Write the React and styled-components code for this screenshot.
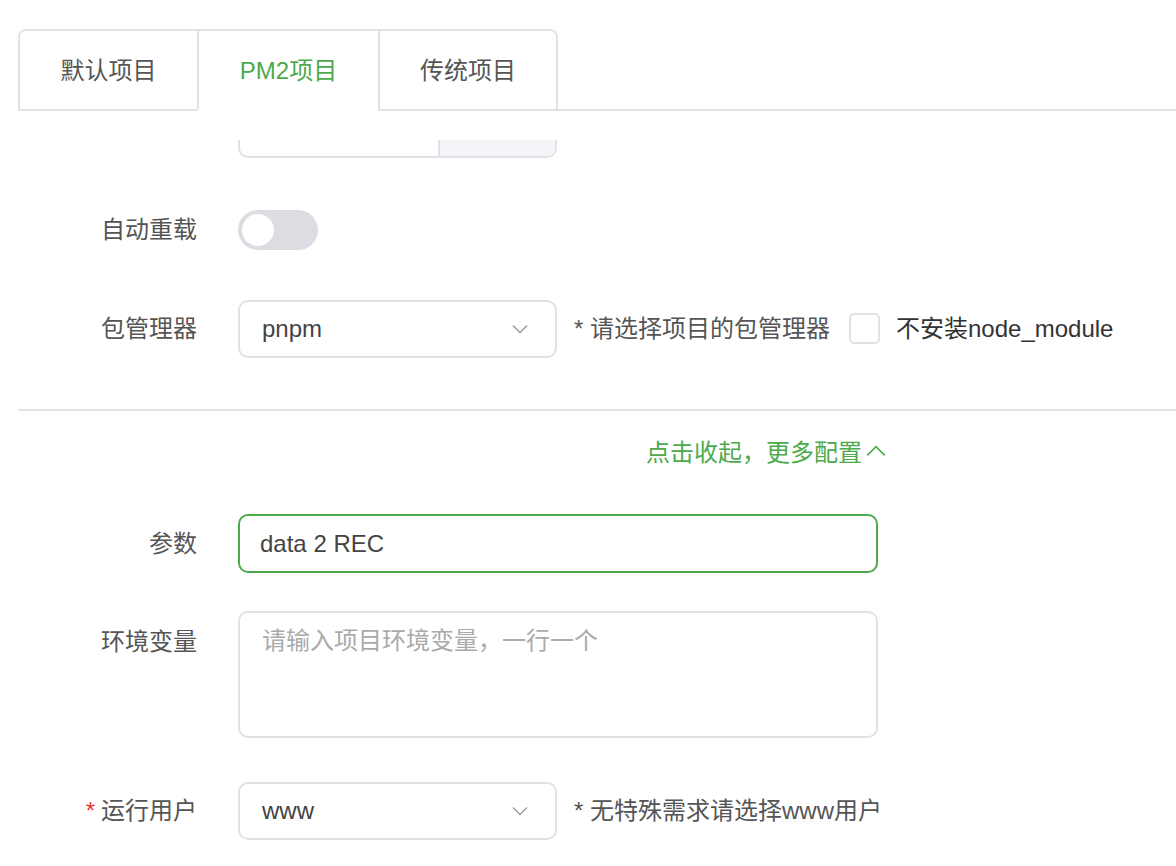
import styled, { createGlobalStyle } from 'styled-components';

const GREEN = '#4caa4a';
const LINE = '#e1e2e7';

const Global = createGlobalStyle`
  html, body {
    margin: 0;
    padding: 0;
    background: #fff;
  }
  body {
    font-family: "Liberation Sans", "Noto Sans CJK SC", sans-serif;
    color: #333;
  }
`;

const Page = styled.div`
  width: 1176px;
  height: 866px;
  overflow: hidden;
  padding: 29px 0 0 18px;
  box-sizing: border-box;
`;

const TabBar = styled.div`
  display: flex;
  border-bottom: 2px solid ${LINE};
`;

const TabGroup = styled.div`
  display: flex;
  border: 2px solid ${LINE};
  border-bottom: none;
  border-radius: 8px 8px 0 0;
  margin-bottom: -2px;
  overflow: hidden;
`;

const Tab = styled.div`
  width: ${(p) => p.$w}px;
  height: 80px;
  display: flex;
  align-items: center;
  justify-content: center;
  padding-bottom: 4px;
  font-size: 24px;
  color: ${(p) => (p.$active ? GREEN : '#555')};
  background: #fff;
  border-left: ${(p) => (p.$first ? 'none' : `2px solid ${LINE}`)};
  border-bottom: 2px solid ${(p) => (p.$active ? '#fff' : LINE)};
  box-sizing: border-box;
`;

const Body = styled.div`
  padding-top: 29px;
`;

const Clip = styled.div`
  height: 18px;
  overflow: hidden;
  display: flex;
  align-items: flex-end;
  padding-left: 220px;
`;

const CutInput = styled.div`
  width: 319px;
  height: 50px;
  border: 2px solid ${LINE};
  border-radius: 10px;
  box-sizing: border-box;
  display: flex;
  overflow: hidden;
`;

const CutMain = styled.div`
  flex: 1;
`;

const CutAddon = styled.div`
  width: 115px;
  background: #f4f5f8;
  border-left: 2px solid ${LINE};
`;

const Form = styled.div`
  display: flex;
  flex-direction: column;
  gap: ${(p) => p.$gap}px;
  padding-top: ${(p) => p.$pad}px;
`;

const Row = styled.div`
  display: flex;
  align-items: ${(p) => (p.$top ? 'flex-start' : 'center')};
  min-height: 58px;
  margin-top: ${(p) => p.$mt || 0}px;
`;

const Label = styled.div`
  width: 220px;
  flex-shrink: 0;
  box-sizing: border-box;
  padding-right: 41px;
  padding-top: ${(p) => (p.$top ? '11px' : '0')};
  padding-bottom: ${(p) => (p.$top ? '0' : '5px')};
  text-align: right;
  font-size: 24px;
  color: #555;

  & > b {
    color: #e53935;
    font-weight: normal;
    margin-right: 6px;
  }
`;

const Switch = styled.div`
  width: 80px;
  height: 40px;
  border-radius: 20px;
  background: #dcdde2;
  display: flex;
  align-items: center;
  padding: 0 4px;
  box-sizing: border-box;

  &::before {
    content: '';
    width: 32px;
    height: 32px;
    border-radius: 50%;
    background: #fff;
  }
`;

const Select = styled.div`
  width: 319px;
  height: 58px;
  border: 2px solid ${LINE};
  border-radius: 10px;
  box-sizing: border-box;
  display: flex;
  align-items: center;
  justify-content: space-between;
  padding: 0 27px 0 22px;
  font-size: 24px;
  color: #444;
`;

const Hint = styled.span`
  font-size: 24px;
  color: #555;
  margin-left: 17px;
  padding-bottom: 5px;
`;

const Check = styled.span`
  display: inline-block;
  width: 31px;
  height: 31px;
  border: 2px solid ${LINE};
  border-radius: 5px;
  box-sizing: border-box;
  margin: 0 16px 2px 19px;
`;

const CheckText = styled.span`
  font-size: 24px;
  color: #333;
  padding-bottom: 5px;
`;

const Divider = styled.div`
  height: 2px;
  background: ${LINE};
  margin-top: 51px;
`;

const Toggle = styled.div`
  padding: 22px 0 0 628px;
  font-size: 24px;
  color: ${GREEN};
  display: flex;
  align-items: center;
  gap: 4px;
`;

const Input = styled.div`
  width: 640px;
  height: 59px;
  border: 2px solid ${(p) => (p.$focus ? GREEN : LINE)};
  border-radius: 10px;
  box-sizing: border-box;
  display: flex;
  align-items: center;
  padding: 0 20px;
  font-size: 24px;
  color: #444;
`;

const TextArea = styled.div`
  width: 640px;
  height: 127px;
  border: 2px solid ${LINE};
  border-radius: 10px;
  box-sizing: border-box;
  padding: 8px 22px;
  font-size: 24px;
  color: #aaa;
`;

const Chevron = ({ up, color = '#999', size = 16 }) => (
  <svg width={size} height={size / 2 + 2} viewBox="0 0 16 9" fill="none">
    <path
      d={up ? 'M1 8 L8 1 L15 8' : 'M1 1 L8 8 L15 1'}
      stroke={color}
      strokeWidth="1.3"
    />
  </svg>
);

export default function App() {
  return (
    <Page>
      <Global />
      <TabBar>
        <TabGroup>
          <Tab $w={177} $first>默认项目</Tab>
          <Tab $w={181} $active>PM2项目</Tab>
          <Tab $w={178}>传统项目</Tab>
        </TabGroup>
      </TabBar>
      <Body>
        <Clip>
          <CutInput>
            <CutMain />
            <CutAddon />
          </CutInput>
        </Clip>
        <Form $pad={43} $gap={41}>
          <Row>
            <Label>自动重载</Label>
            <Switch />
          </Row>
          <Row>
            <Label>包管理器</Label>
            <Select>
              pnpm
              <Chevron />
            </Select>
            <Hint>* 请选择项目的包管理器</Hint>
            <Check />
            <CheckText>不安装node_module</CheckText>
          </Row>
        </Form>
        <Divider />
        <Toggle>
          点击收起，更多配置
          <Chevron up color={GREEN} size={20} />
        </Toggle>
        <Form $pad={46} $gap={38}>
          <Row>
            <Label>参数</Label>
            <Input $focus>data 2 REC</Input>
          </Row>
          <Row $top>
            <Label $top>环境变量</Label>
            <TextArea>请输入项目环境变量，一行一个</TextArea>
          </Row>
          <Row $mt={6}>
            <Label>
              <b>*</b>运行用户
            </Label>
            <Select>
              www
              <Chevron />
            </Select>
            <Hint>* 无特殊需求请选择www用户</Hint>
          </Row>
        </Form>
      </Body>
    </Page>
  );
}
